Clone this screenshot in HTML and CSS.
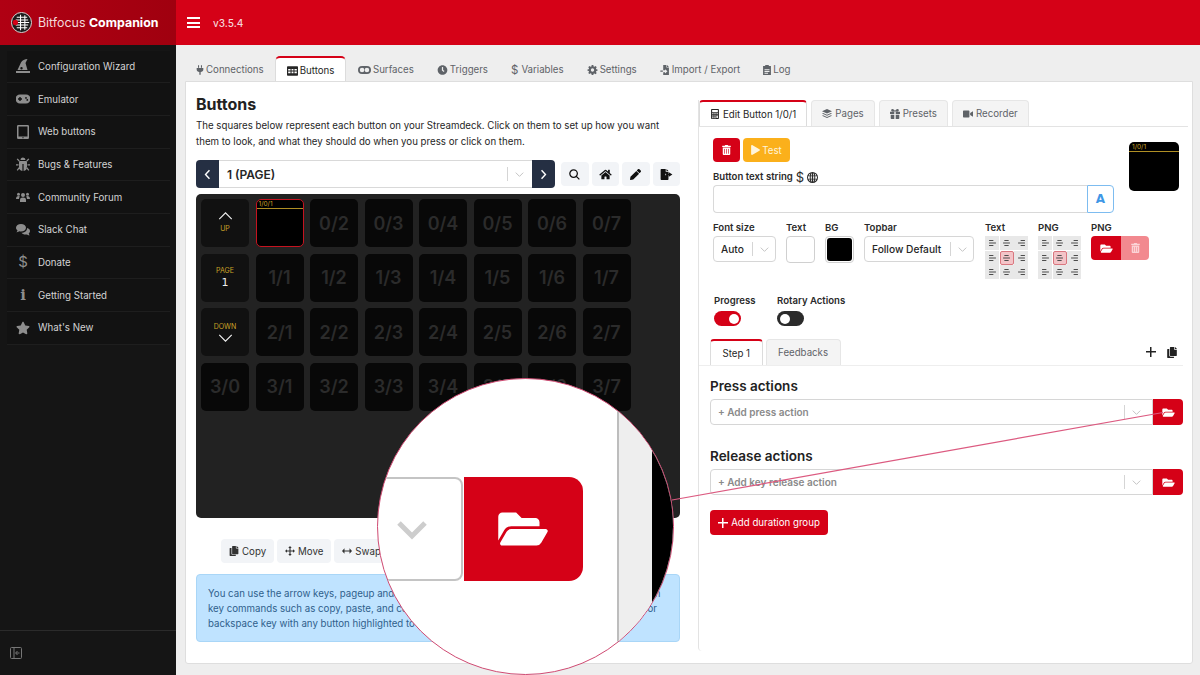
FILE: index.html
```html
<!DOCTYPE html>
<html lang="en">
<head>
    <meta charset="UTF-8">
    <meta name="viewport" content="width=device-width, initial-scale=1.0">
    <title>Bitfocus Companion</title>
    <link rel="stylesheet" href="styles.css">
</head>
<body>
    <!-- Icon sprite -->
    <svg class="sprite" xmlns="http://www.w3.org/2000/svg">
        <symbol id="i-folder" viewBox="0 0 576 512"><path d="M572.694 292.093L500.27 416.248A63.997 63.997 0 0 1 444.989 448H45.025c-18.523 0-30.064-20.093-20.731-36.093l72.424-124.155A64 64 0 0 1 152 256h399.964c18.523 0 30.064 20.093 20.73 36.093zM152 224h328v-48c0-26.51-21.49-48-48-48H272l-64-64H48C21.49 64 0 85.49 0 112v278.046l69.077-118.418C86.214 242.25 117.989 224 152 224z"/></symbol>
        <symbol id="i-trash" viewBox="0 0 448 512"><path d="M32 464a48 48 0 0 0 48 48h288a48 48 0 0 0 48-48V128H32zm272-256a16 16 0 0 1 32 0v224a16 16 0 0 1-32 0zm-96 0a16 16 0 0 1 32 0v224a16 16 0 0 1-32 0zm-96 0a16 16 0 0 1 32 0v224a16 16 0 0 1-32 0zM432 32H312l-9.4-18.7A24 24 0 0 0 281.1 0H166.8a23.72 23.72 0 0 0-21.4 13.3L136 32H16A16 16 0 0 0 0 48v32a16 16 0 0 0 16 16h416a16 16 0 0 0 16-16V48a16 16 0 0 0-16-16z"/></symbol>
        <symbol id="i-star" viewBox="0 0 576 512"><path d="M259.3 17.8L194 150.2 47.9 171.5c-26.2 3.8-36.7 36.1-17.7 54.6l105.7 103-25 145.5c-4.5 26.3 23.2 46 46.4 33.7L288 439.6l130.7 68.7c23.2 12.2 50.9-7.4 46.4-33.7l-25-145.5 105.7-103c19-18.5 8.5-50.8-17.7-54.6L382 150.2 316.7 17.8c-11.7-23.6-45.6-23.9-57.4 0z"/></symbol>
        <symbol id="i-home" viewBox="0 0 576 512"><path d="M280.37 148.26L96 300.11V464a16 16 0 0 0 16 16l112.06-.29a16 16 0 0 0 15.92-16V368a16 16 0 0 1 16-16h64a16 16 0 0 1 16 16v95.64a16 16 0 0 0 16 16.05L464 480a16 16 0 0 0 16-16V300L295.67 148.26a12.19 12.19 0 0 0-15.3 0zM571.6 251.47L488 182.56V44.05a12 12 0 0 0-12-12h-56a12 12 0 0 0-12 12v72.61L318.47 43a48 48 0 0 0-61 0L4.34 251.47a12 12 0 0 0-1.6 16.9l25.5 31A12 12 0 0 0 45.15 301l235.22-193.74a12.19 12.19 0 0 1 15.3 0L530.9 301a12 12 0 0 0 16.9-1.6l25.5-31a12 12 0 0 0-1.7-16.93z"/></symbol>
        <symbol id="i-search" viewBox="0 0 12 12"><path fill="none" stroke="currentColor" stroke-width="1.400" d="M5 .9a4.100 4.100 0 1 0 0 8.200 4.100 4.100 0 0 0 0-8.200zM8 8l3.300 3.300"/></symbol>
        <symbol id="i-pencil" viewBox="0 0 512 512"><path d="M497.9 142.1l-46.1 46.1c-4.7 4.7-12.3 4.7-17 0l-111-111c-4.7-4.7-4.7-12.3 0-17l46.1-46.1c18.7-18.7 49.1-18.7 67.9 0l60.1 60.1c18.8 18.7 18.8 49.1 0 67.9zM284.2 99.8L21.6 362.4.4 483.9c-2.9 16.4 11.4 30.6 27.8 27.8l121.5-21.3 262.6-262.6c4.7-4.7 4.7-12.3 0-17l-111-111c-4.8-4.7-12.4-4.7-17.1 0z"/></symbol>
        <symbol id="i-clock" viewBox="0 0 512 512"><path d="M256 8C119 8 8 119 8 256s111 248 248 248 248-111 248-248S393 8 256 8zm92.49 313l-20 25a16 16 0 0 1-22.49 2.5l-67-49.72a40 40 0 0 1-15-31.23V112a16 16 0 0 1 16-16h32a16 16 0 0 1 16 16v144l58 42.5a16 16 0 0 1 2.49 22.5z"/></symbol>
        <symbol id="i-play" viewBox="0 0 448 512"><path d="M424.4 214.7L72.4 6.6C43.8-10.3 0 6.1 0 47.9V464c0 37.5 40.7 60.1 72.4 41.3l352-208c31.4-18.5 31.5-64.1 0-82.6z"/></symbol>
        <symbol id="i-copy" viewBox="0 0 448 512"><path d="M320 448v40c0 13.255-10.745 24-24 24H24c-13.255 0-24-10.745-24-24V120c0-13.255 10.745-24 24-24h72v296c0 30.879 25.121 56 56 56h168zm0-344V0H152c-13.255 0-24 10.745-24 24v368c0 13.255 10.745 24 24 24h272c13.255 0 24-10.745 24-24V128H344c-13.2 0-24-10.8-24-24zm120.971-31.029L375.029 7.029A24 24 0 0 0 358.059 0H352v96h96v-6.059a24 24 0 0 0-7.029-16.97z"/></symbol>
        <symbol id="i-plug" viewBox="0 0 12 14"><path d="M3 0h1.600v3.500H3zM7.400 0H9v3.500H7.400zM1 4h10v2.200C11 8.500 9.300 9.800 7 10v4H5v-4C2.700 9.800 1 8.500 1 6.200z"/></symbol>
        <symbol id="i-table" viewBox="0 0 14 12"><path fill-rule="evenodd" d="M1 0h12a1 1 0 0 1 1 1v10a1 1 0 0 1-1 1H1a1 1 0 0 1-1-1V1a1 1 0 0 1 1-1zM1.500 3.500v2h3v-2zm4.300 0v2h2.400v-2zm3.700 0v2h3v-2zm-8 3.200v2.300h3V6.700zm4.300 0v2.300h2.400V6.700zm3.700 0v2.300h3V6.700z"/></symbol>
        <symbol id="i-toggle" viewBox="0 0 16 10"><path fill-rule="evenodd" d="M5 0h6a5 5 0 0 1 0 10H5A5 5 0 0 1 5 0zm6 2.200a2.800 2.800 0 1 0 0 5.600 2.800 2.800 0 0 0 0-5.600zm-6 0a2.800 2.800 0 1 0 0 5.600 2.800 2.800 0 0 0 0-5.600z"/></symbol>
        <symbol id="i-cog" viewBox="0 0 24 24"><path fill-rule="evenodd" d="M10 0h4l.6 3.300 2 .9L19.400 2.300l2.800 2.800-1.900 2.800.9 2L24 10.500v3.500l-2.800.6-.9 2 1.900 2.800-2.800 2.800-2.800-1.900-2 .9L14 24h-4l-.6-3.300-2-.9-2.800 1.900-2.800-2.800 1.900-2.800-.9-2L0 14v-3.500l2.800-.6.9-2-1.900-2.800 2.800-2.800 2.800 1.900 2-.9zM12 8a4 4 0 1 0 0 8 4 4 0 0 0 0-8z"/></symbol>
        <symbol id="i-import" viewBox="0 0 13 14"><path d="M4 0h4.500v3.500H12V14H4v-4h2.500v1.800L10 8.800 6.500 5.800V7.500H4zM9.300 0L12 2.700H9.300zM0 7.800h3.500v1.500H0z"/></symbol>
        <symbol id="i-file" viewBox="0 0 11 14"><path fill-rule="evenodd" d="M0 1.500h3V0h5v1.500h3V14H0zM2 6v1.200h7V6zm0 2.500v1.200h7V8.500zm0 2.500v1.200h5V11z"/></symbol>
        <symbol id="i-calc" viewBox="0 0 11 14"><path fill-rule="evenodd" d="M1 0h9a1 1 0 0 1 1 1v12a1 1 0 0 1-1 1H1a1 1 0 0 1-1-1V1a1 1 0 0 1 1-1zm.500 1.500v3h8v-3zm0 4.500v1.500h2V6zm3 0v1.500h2V6zm3 0v1.500h2V6zm-6 3v1.500h2V9zm3 0v1.500h2V9zm3 0v3.500h2V9zm-6 2.500V13h2v-1.500zm3 0V13h2v-1.500z"/></symbol>
        <symbol id="i-layers" viewBox="0 0 14 14"><path d="M7 0l7 3.200L7 6.400 0 3.200zM1.500 5.600L7 8.100l5.500-2.500L14 6.300 7 9.500 0 6.300zm0 3.200L7 11.300l5.500-2.500L14 9.500l-7 3.200-7-3.200z"/></symbol>
        <symbol id="i-gift" viewBox="0 0 14 14"><path d="M0 4h6v3H0zM8 4h6v3H8zM1 8h5v6H2a1 1 0 0 1-1-1zM8 8h5v5a1 1 0 0 1-1 1H8zM3.500 0C5 0 6.500 1.500 7 3 7.500 1.500 9 0 10.500 0 13 0 13 3.500 10.500 3.500h-7C1 3.500 1 0 3.500 0z"/></symbol>
        <symbol id="i-video" viewBox="0 0 14 10"><path d="M1 0h7a1 1 0 0 1 1 1v8a1 1 0 0 1-1 1H1a1 1 0 0 1-1-1V1a1 1 0 0 1 1-1zM10 3.500L14 1v8l-4-2.500z"/></symbol>
        <symbol id="i-wizard" viewBox="0 0 14 14"><path d="M1.500 11L5 3.500C6 1.200 9 0 11.500 0L9.500 4l2 7zM0 12h14v2H0zM5.500 8a1.200 1.200 0 1 0 0 2.400 1.200 1.200 0 0 0 0-2.400z"/></symbol>
        <symbol id="i-gamepad" viewBox="0 0 14 9"><path fill-rule="evenodd" d="M4 0h6a4.500 4.500 0 0 1 0 9H4A4.500 4.500 0 0 1 4 0zM3.300 2.500v1.300H2v1.400h1.300v1.300h1.400V5.200H6V3.800H4.700V2.500zm6.700 0a.9.900 0 1 0 0 1.800.9.900 0 0 0 0-1.800zm1.300 2a.9.900 0 1 0 0 1.800.9.900 0 0 0 0-1.800z"/></symbol>
        <symbol id="i-tablet" viewBox="0 0 12 14"><path fill-rule="evenodd" d="M1.200 0h9.600A1.200 1.200 0 0 1 12 1.200v11.600a1.200 1.200 0 0 1-1.200 1.200H1.200A1.200 1.200 0 0 1 0 12.800V1.200A1.200 1.200 0 0 1 1.200 0zm.300 1.500v10h9v-10zM6 12.100a.6.600 0 1 0 0 1.200.6.600 0 0 0 0-1.200z"/></symbol>
        <symbol id="i-bug" viewBox="0 0 14 14"><path d="M4.500 3a2.500 2.500 0 0 1 5 0zM3.500 4h7A2 2 0 0 1 11 5.300V10a4 4 0 0 1-3.400 3.900V7h-1.200v6.900A4 4 0 0 1 3 10V5.300A2 2 0 0 1 3.500 4zM0 7.300h2.500v1.300H0zM11.500 7.300H14v1.300h-2.500zM.700 2.300l.900-.9L3.700 3.500l-.9.9zM12.400 1.400l.9.9-2.100 2.100-.9-.9zM.700 13l2.100-2.800 1 .8-2.100 2.800zM13.300 13l-2.100-2.800-1 .8 2.100 2.800z"/></symbol>
        <symbol id="i-users" viewBox="0 0 14 10"><circle cx="2.500" cy="2.200" r="1.500"/><circle cx="11.500" cy="2.200" r="1.500"/><circle cx="7" cy="3" r="2"/><path d="M0 7c0-2 1-3 2.500-3 .6 0 1 .2 1.400.500C3.300 5.200 3 6 3 7zM14 7c0-2-1-3-2.500-3-.6 0-1 .2-1.400.500.6.7.900 1.500.900 2.500zM4 10V8c0-1.700 1-2.500 3-2.500s3 .8 3 2.500v2z"/></symbol>
        <symbol id="i-comments" viewBox="0 0 14 12"><path d="M5 0c2.800 0 5 1.600 5 3.800S7.800 7.500 5 7.500c-.6 0-1.200-.1-1.700-.2C2.500 8 1.400 8.300.3 8.300 1 7.700 1.400 7 1.500 6.400.6 5.700 0 4.800 0 3.800 0 1.600 2.200 0 5 0z"/><path d="M11 4c1.800.4 3 1.600 3 3 0 .9-.5 1.800-1.300 2.400.1.700.5 1.300 1.100 1.900-1 0-2-.3-2.800-.9-.5.1-1 .2-1.500.2-1.800 0-3.300-.7-4-1.800C8.500 8.700 11.300 6.800 11 4z"/></symbol>
        <symbol id="i-move" viewBox="0 0 14 14"><path d="M7 0l2.400 2.800H7.800v3.400h3.400V4.600L14 7l-2.800 2.400V7.800H7.800v3.400h1.600L7 14l-2.400-2.800h1.600V7.800H2.800v1.600L0 7l2.800-2.400v1.600h3.400V2.800H4.600z"/></symbol>
        <symbol id="i-swap" viewBox="0 0 14 8"><path d="M3.500 0v3.200h7V0L14 4l-3.500 4V4.800h-7V8L0 4z"/></symbol>
        <symbol id="i-export" viewBox="0 0 15 14"><path d="M0 1a1 1 0 0 1 1-1h5.500v3.500H10V6H6v2h4v5a1 1 0 0 1-1 1H1a1 1 0 0 1-1-1zM7.500 0L10 2.500H7.500zM10.500 4L15 7l-4.500 3V8H7V6h3.500z"/></symbol>
        <symbol id="i-globe" viewBox="0 0 14 14"><path fill-rule="evenodd" d="M7 0a7 7 0 1 1 0 14A7 7 0 0 1 7 0zM6.200 1.300C5.600 1.900 5.100 3 4.900 4.300h1.300zm1.600 0v3h1.300c-.2-1.300-.7-2.400-1.300-3zM3.600 4.300c.1-.9.400-1.700.7-2.300-1 .5-1.800 1.300-2.300 2.300zm6.800 0H12c-.5-1-1.300-1.800-2.300-2.300.3.600.6 1.400.7 2.300zM1.500 5.500c-.1.500-.2 1-.2 1.500s.1 1 .2 1.500h2V5.500zm3.300 0v3h1.400v-3zm3 0v3h1.400v-3zm2.700 0v3h2c.1-.5.2-1 .2-1.500s-.1-1-.2-1.500zM2 9.700c.5 1 1.300 1.800 2.300 2.300-.3-.6-.6-1.400-.7-2.300zm2.900 0c.2 1.300.7 2.400 1.300 3v-3zm2.900 0v3c.6-.6 1.100-1.700 1.300-3zm2.600 0c-.1.9-.4 1.700-.7 2.300 1-.5 1.800-1.300 2.300-2.300z"/></symbol>
        <symbol id="i-collapse" viewBox="0 0 12 12"><path fill="none" stroke="currentColor" d="M.5 1.500a1 1 0 0 1 1-1h9a1 1 0 0 1 1 1v9a1 1 0 0 1-1 1h-9a1 1 0 0 1-1-1zM4 .5v11M9.500 6H6M7.500 4L5.500 6l2 2"/></symbol>
        <symbol id="i-chev-down" viewBox="0 0 14 8"><path fill="none" stroke="currentColor" stroke-width="1.600" d="M1 1l6 6 6-6"/></symbol>
        <symbol id="i-align" viewBox="0 0 8 7"><path d="M0 0h5v1.300H0zM0 2.800h8v1.400H0zM0 5.700h5V7H0z"/></symbol>
        <symbol id="i-align-c" viewBox="0 0 8 7"><path d="M1.500 0h5v1.300h-5zM0 2.800h8v1.400H0zM1.500 5.700h5V7h-5z"/></symbol>
        <symbol id="i-align-r" viewBox="0 0 8 7"><path d="M3 0h5v1.300H3zM0 2.800h8v1.400H0zM3 5.700h5V7H3z"/></symbol>
    </svg>

    <div class="app">
        <!-- Sidebar -->
        <aside class="sidebar">
            <div class="brand">
                <svg class="brand-logo" viewBox="0 0 22 22">
                    <circle cx="11" cy="11" r="10.500" fill="#1b1b1b" stroke="#ddd" stroke-width="1"/>
                    <path d="M6 5.500h11M5 8.300h13M6 11h13M5 13.700h13M6 16.500h11M10 3v16M14.500 3.500v15" stroke="#fff" stroke-width="1.100" fill="none"/>
                    <circle cx="4.500" cy="11" r="2.800" fill="#d50117"/>
                </svg>
                <span>Bitfocus <b>Companion</b></span>
            </div>
            <nav class="nav">
                <a class="nav-item"><svg class="nav-icon"><use href="#i-wizard"/></svg>Configuration Wizard</a>
                <a class="nav-item"><svg class="nav-icon"><use href="#i-gamepad"/></svg>Emulator</a>
                <a class="nav-item"><svg class="nav-icon"><use href="#i-tablet"/></svg>Web buttons</a>
                <a class="nav-item"><svg class="nav-icon"><use href="#i-bug"/></svg>Bugs &amp; Features</a>
                <a class="nav-item"><svg class="nav-icon"><use href="#i-users"/></svg>Community Forum</a>
                <a class="nav-item"><svg class="nav-icon"><use href="#i-comments"/></svg>Slack Chat</a>
                <a class="nav-item"><span class="nav-icon nav-glyph">$</span>Donate</a>
                <a class="nav-item"><span class="nav-icon nav-glyph nav-info">i</span>Getting Started</a>
                <a class="nav-item"><svg class="nav-icon"><use href="#i-star"/></svg>What's New</a>
            </nav>
            <div class="sidebar-foot"><svg class="collapse-icon"><use href="#i-collapse"/></svg></div>
        </aside>

        <div class="main">
            <header class="topbar">
                <div class="burger"><i></i><i></i><i></i></div>
                <span class="version">v3.5.4</span>
            </header>

            <div class="content">
                <!-- Main tabs -->
                <div class="tabs main-tabs">
                    <a class="tab"><svg class="ico ico-n"><use href="#i-plug"/></svg>Connections</a>
                    <a class="tab active"><svg class="ico ico-t1"><use href="#i-table"/></svg>Buttons</a>
                    <a class="tab"><svg class="ico ico-l"><use href="#i-toggle"/></svg>Surfaces</a>
                    <a class="tab"><svg class="ico ico-t1"><use href="#i-clock"/></svg>Triggers</a>
                    <a class="tab"><span class="dollar">$</span>Variables</a>
                    <a class="tab"><svg class="ico ico-t1"><use href="#i-cog"/></svg>Settings</a>
                    <a class="tab"><svg class="ico"><use href="#i-import"/></svg>Import / Export</a>
                    <a class="tab"><svg class="ico ico-n"><use href="#i-file"/></svg>Log</a>
                </div>

                <div class="card">
                    <!-- Left column -->
                    <section class="col-left">
                        <h1 class="title">Buttons</h1>
                        <p class="intro">The squares below represent each button on your Streamdeck. Click on them to set up how you want them to look, and what they should do when you press or click on them.</p>

                        <div class="pager">
                            <div class="page-select">
                                <button class="nav-btn"><svg class="arrow" viewBox="0 0 8 14"><path d="M6.500 1.500L1.500 7l5 5.500"/></svg></button>
                                <div class="page-value">
                                    <span>1 (PAGE)</span>
                                    <i class="sep"></i>
                                    <svg class="chev"><use href="#i-chev-down"/></svg>
                                </div>
                                <button class="nav-btn"><svg class="arrow" viewBox="0 0 8 14"><path d="M1.500 1.500l5 5.500-5 5.500"/></svg></button>
                            </div>
                            <button class="tool"><svg class="ico-m"><use href="#i-search"/></svg></button>
                            <button class="tool"><svg class="ico-m ico-w"><use href="#i-home"/></svg></button>
                            <button class="tool"><svg class="ico-m"><use href="#i-pencil"/></svg></button>
                            <button class="tool"><svg class="ico-m ico-w"><use href="#i-export"/></svg></button>
                        </div>

                        <div class="deck">
                            <div class="key key-nav"><svg class="key-chev" viewBox="0 0 16 9"><path d="M1 8l7-7 7 7"/></svg><small>UP</small></div>
                            <div class="key key-selected"><span class="key-bar">1/0/1</span></div>
                            <div class="key">0/2</div><div class="key">0/3</div><div class="key">0/4</div><div class="key">0/5</div><div class="key">0/6</div><div class="key">0/7</div>
                            <div class="key key-nav"><small>PAGE</small><span class="key-num">1</span></div>
                            <div class="key">1/1</div><div class="key">1/2</div><div class="key">1/3</div><div class="key">1/4</div><div class="key">1/5</div><div class="key">1/6</div><div class="key">1/7</div>
                            <div class="key key-nav"><small>DOWN</small><svg class="key-chev" viewBox="0 0 16 9"><path d="M1 1l7 7 7-7"/></svg></div>
                            <div class="key">2/1</div><div class="key">2/2</div><div class="key">2/3</div><div class="key">2/4</div><div class="key">2/5</div><div class="key">2/6</div><div class="key">2/7</div>
                            <div class="key">3/0</div>
                            <div class="key">3/1</div><div class="key">3/2</div><div class="key">3/3</div><div class="key">3/4</div><div class="key">3/5</div><div class="key">3/6</div><div class="key">3/7</div>
                        </div>

                        <div class="deck-actions">
                            <button class="tool-text"><svg class="ico"><use href="#i-copy"/></svg>Copy</button>
                            <button class="tool-text"><svg class="ico"><use href="#i-move"/></svg>Move</button>
                            <button class="tool-text"><svg class="ico"><use href="#i-swap"/></svg>Swap</button>
                        </div>

                        <div class="callout">You can use the arrow keys, pageup and pagedown to navigate between buttons, and the common key commands such as copy, paste, and cut to move buttons too. You can also press the delete or backspace key with any button highlighted to delete it.</div>
                    </section>

                    <!-- Right column -->
                    <section class="col-right">
                        <div class="tabs edit-tabs">
                            <a class="tab boxed active"><svg class="ico"><use href="#i-calc"/></svg>Edit Button 1/0/1</a>
                            <a class="tab boxed"><svg class="ico"><use href="#i-layers"/></svg>Pages</a>
                            <a class="tab boxed"><svg class="ico"><use href="#i-gift"/></svg>Presets</a>
                            <a class="tab boxed"><svg class="ico"><use href="#i-video"/></svg>Recorder</a>
                        </div>

                        <div class="editor">
                            <div class="editor-top">
                                <div class="editor-fields">
                                    <div class="btn-row">
                                        <button class="btn btn-red btn-icon"><svg class="ico-t"><use href="#i-trash"/></svg></button>
                                        <button class="btn btn-amber"><svg class="ico-p"><use href="#i-play"/></svg>Test</button>
                                    </div>
                                    <div class="label label-string">Button text string <span class="label-dollar">$</span><svg class="ico-g"><use href="#i-globe"/></svg></div>
                                    <div class="text-input">
                                        <div class="text-field"></div>
                                        <div class="text-addon">A</div>
                                    </div>
                                </div>
                                <div class="preview"><span class="key-bar">1/0/1</span></div>
                            </div>

                            <div class="style-row">
                                <div class="field f-size">
                                    <div class="label">Font size</div>
                                    <div class="select small"><span>Auto</span><i class="sep"></i><svg class="chev"><use href="#i-chev-down"/></svg></div>
                                </div>
                                <div class="field f-text">
                                    <div class="label">Text</div>
                                    <div class="swatch"></div>
                                </div>
                                <div class="field f-bg">
                                    <div class="label">BG</div>
                                    <div class="swatch swatch-black"><i></i></div>
                                </div>
                                <div class="field f-top">
                                    <div class="label">Topbar</div>
                                    <div class="select small"><span>Follow Default</span><i class="sep"></i><svg class="chev"><use href="#i-chev-down"/></svg></div>
                                </div>
                                <div class="field f-grid">
                                    <div class="label">Text</div>
                                    <div class="align-grid">
                                        <i><svg><use href="#i-align"/></svg></i><i><svg><use href="#i-align-c"/></svg></i><i><svg><use href="#i-align-r"/></svg></i>
                                        <i><svg><use href="#i-align"/></svg></i><i class="on"><svg><use href="#i-align-c"/></svg></i><i><svg><use href="#i-align-r"/></svg></i>
                                        <i><svg><use href="#i-align"/></svg></i><i><svg><use href="#i-align-c"/></svg></i><i><svg><use href="#i-align-r"/></svg></i>
                                    </div>
                                </div>
                                <div class="field f-grid">
                                    <div class="label">PNG</div>
                                    <div class="align-grid">
                                        <i><svg><use href="#i-align"/></svg></i><i><svg><use href="#i-align-c"/></svg></i><i><svg><use href="#i-align-r"/></svg></i>
                                        <i><svg><use href="#i-align"/></svg></i><i class="on"><svg><use href="#i-align-c"/></svg></i><i><svg><use href="#i-align-r"/></svg></i>
                                        <i><svg><use href="#i-align"/></svg></i><i><svg><use href="#i-align-c"/></svg></i><i><svg><use href="#i-align-r"/></svg></i>
                                    </div>
                                </div>
                                <div class="field">
                                    <div class="label">PNG</div>
                                    <div class="png-btns">
                                        <button class="png-open"><svg class="ico-f"><use href="#i-folder"/></svg></button>
                                        <button class="png-del"><svg class="ico-t"><use href="#i-trash"/></svg></button>
                                    </div>
                                </div>
                            </div>

                            <div class="toggle-row">
                                <div class="toggle-field">
                                    <div class="label">Progress</div>
                                    <div class="switch on"></div>
                                </div>
                                <div class="toggle-field">
                                    <div class="label">Rotary Actions</div>
                                    <div class="switch"></div>
                                </div>
                            </div>
                        </div>

                        <div class="step-bar">
                            <a class="tab boxed active">Step 1</a>
                            <a class="tab boxed">Feedbacks</a>
                            <div class="step-tools">
                                <span class="plus"></span>
                                <svg class="ico-c"><use href="#i-copy"/></svg>
                            </div>
                        </div>

                        <h2 class="section-title">Press actions</h2>
                        <div class="action-row">
                            <div class="select wide"><span class="placeholder">+ Add press action</span><i class="sep"></i><svg class="chev"><use href="#i-chev-down"/></svg></div>
                            <button class="action-open"><svg class="ico-f"><use href="#i-folder"/></svg></button>
                        </div>

                        <h2 class="section-title release">Release actions</h2>
                        <div class="action-row">
                            <div class="select wide"><span class="placeholder">+ Add key release action</span><i class="sep"></i><svg class="chev"><use href="#i-chev-down"/></svg></div>
                            <button class="action-open"><svg class="ico-f"><use href="#i-folder"/></svg></button>
                        </div>

                        <button class="btn btn-red btn-duration"><span class="plus plus-white"></span>Add duration group</button>
                    </section>
                </div>
            </div>
        </div>
    </div>

    <!-- Callout: pointer line and magnifier -->
    <svg class="pointer" viewBox="0 0 1200 675"><path d="M672 500L1163 412.500"/></svg>
    <div class="lens">
        <div class="lens-select"><svg class="lens-chev" viewBox="0 0 32 20"><path d="M3 3l13 13L29 3"/></svg></div>
        <div class="lens-open"><svg class="lens-folder"><use href="#i-folder"/></svg></div>
        <div class="lens-rule"></div>
        <div class="lens-gray"></div>
        <div class="lens-black"></div>
    </div>
</body>
</html>
```

FILE: styles.css
```css
* {
    box-sizing: border-box;
}

body {
    margin: 0;
    width: 1200px;
    height: 675px;
    overflow: hidden;
    font-family: Inter, "Liberation Sans", sans-serif;
    font-size: 9.7px;
    color: #262626;
    background-color: #eeeeee;
}

button {
    font-family: inherit;
    border: none;
    padding: 0;
}

.sprite {
    display: none;
}

svg {
    fill: currentColor;
    display: block;
    flex: none;
}

.app {
    display: flex;
    height: 675px;
}

/* Sidebar */
.sidebar {
    width: 176px;
    flex: none;
    display: flex;
    flex-direction: column;
    background-color: #151515;
    color: #d4d4d4;
}

.brand {
    height: 45px;
    display: flex;
    align-items: center;
    gap: 6px;
    padding-left: 11px;
    font-size: 12.4px;
    color: #f3d9db;
    background: linear-gradient(to right, #b00013, #a0000f);
}

.brand b {
    color: #fff;
    font-weight: 700;
}

.brand-logo {
    width: 21px;
    height: 21px;
}

.nav {
    flex: 1;
    padding: 5.500px 6px 0 7px;
}

.nav-item {
    height: 32.7px;
    display: flex;
    align-items: center;
    font-size: 9.7px;
    background-color: #121212;
    border-bottom: 1px solid #1e1e1e;
}

.nav-icon {
    width: 14px;
    height: 14px;
    margin: 0 8px 0 9px;
    color: #8e8e8e;
}

.nav-glyph {
    display: block;
    text-align: center;
    line-height: 14px;
    font-size: 15px;
}

.nav-info {
    font-family: "DejaVu Serif", serif;
    font-weight: 700;
}

.sidebar-foot {
    height: 45px;
    border-top: 1px solid #2b2b2b;
    display: flex;
    align-items: center;
    padding-left: 10px;
}

.collapse-icon {
    width: 12px;
    height: 12px;
    color: #777;
}

/* Top bar */
.main {
    flex: 1;
    min-width: 0;
    display: flex;
    flex-direction: column;
}

.topbar {
    height: 45px;
    flex: none;
    display: flex;
    align-items: center;
    padding-left: 11px;
    background-color: #d50117;
    color: #f6d5d8;
}

.burger {
    width: 13px;
    margin-right: 13px;
    display: flex;
    flex-direction: column;
    gap: 2.500px;
}

.burger i {
    display: block;
    height: 2px;
    background-color: #fff;
}

.version {
    font-size: 10px;
    font-weight: 500;
}

/* Tabs */
.content {
    flex: 1;
    padding: 11px 7px 11px 9px;
    display: flex;
    flex-direction: column;
}

.tabs {
    display: flex;
}

.main-tabs {
    height: 25px;
    padding-left: 0;
}

.tab {
    display: flex;
    align-items: center;
    gap: 2px;
    height: 25px;
    padding: 2px 11.500px 0;
    color: #5f6368;
    font-size: 9.7px;
    white-space: nowrap;
}

.tab.active {
    color: #262626;
    background-color: #fff;
    border: 1px solid #dcdcdc;
    border-top: 2px solid #d50117;
    border-bottom: none;
    border-radius: 5px 5px 0 0;
    padding: 2px 11px 0;
}

.ico {
    width: 10px;
    height: 10px;
}

.ico-n {
    width: 8px;
}

.ico-t1 {
    width: 11px;
}

.ico-l {
    width: 13px;
}

.dollar {
    margin-right: 1px;
    font-size: 11.5px;
}

.main-tabs .tab:first-child {
    padding: 2px 11px 0;
}

/* Card */
.card {
    flex: 1;
    display: flex;
    min-height: 0;
    gap: 18px;
    background-color: #fff;
    border: 1px solid #dedede;
    border-radius: 0 0 3px 3px;
    padding: 11px 8px 0 10px;
}

.col-left {
    width: 484px;
    flex: none;
}

.title {
    margin: 0;
    font-size: 16px;
    font-weight: 700;
    line-height: 22px;
    color: #222;
}

.intro {
    margin: 3px 0 0;
    line-height: 15.500px;
    font-size: 9.7px;
}

.pager {
    display: flex;
    align-items: center;
    gap: 3px;
    margin-top: 11px;
}

.page-select {
    width: 359px;
    height: 28px;
    margin-right: 3px;
    display: flex;
}

.nav-btn {
    width: 23px;
    background-color: #252f43;
}

.nav-btn:first-child {
    border-radius: 4px 0 0 4px;
}

.nav-btn:last-child {
    border-radius: 0 4px 4px 0;
}

.arrow {
    width: 7px;
    height: 11px;
    margin: auto;
    fill: none;
    stroke: #fff;
    stroke-width: 1.800;
}

.page-value {
    flex: 1;
    display: flex;
    align-items: center;
    padding: 0 8px;
    border-top: 1px solid #d9d9d9;
    border-bottom: 1px solid #d9d9d9;
    font-size: 12px;
    font-weight: 600;
}

.page-value span {
    flex: 1;
}

.sep {
    display: block;
    width: 1px;
    height: 14px;
    background-color: #d5d5d5;
}

.chev {
    width: 9px;
    height: 5px;
    margin: 0 0 0 7px;
    color: #c4c4c4;
}

.tool {
    width: 27.500px;
    height: 24px;
    background-color: #f2f4f7;
    border-radius: 4px;
    color: #111;
}

.ico-m {
    width: 11px;
    height: 11px;
    margin: auto;
}

.ico-w {
    width: 13px;
}

/* Button grid */
.deck {
    height: 324px;
    margin-top: 6px;
    padding: 5px;
    display: grid;
    grid-template-columns: repeat(8, 48px);
    grid-auto-rows: 48px;
    gap: 6.500px;
    background-color: #222;
    border-radius: 5px;
}

.key {
    display: flex;
    flex-direction: column;
    align-items: center;
    justify-content: center;
    background-color: #080808;
    border-radius: 5px;
    font-size: 18px;
    font-weight: 600;
    color: #2b2b2b;
}

.key-nav {
    background-color: #111;
    color: #fff;
}

.key-nav small {
    color: #c9a227;
    font-size: 7px;
    font-weight: 400;
    line-height: 10px;
}

.key-chev {
    width: 15px;
    height: 8px;
    margin: 0 0 4px;
    fill: none;
    stroke: #f2f2f2;
    stroke-width: 1.300;
}

.key-nav small + .key-chev {
    margin: 2px 0 0;
}

.key-num {
    font-family: "DejaVu Sans", sans-serif;
    font-size: 11px;
    font-weight: 400;
    line-height: 14px;
    color: #eee;
}

.key-selected {
    justify-content: flex-start;
    align-items: stretch;
    background-color: #000;
    border: 1.500px solid #c5131f;
}

.key-bar {
    display: block;
    height: 9px;
    padding-left: 2px;
    font-size: 6.500px;
    line-height: 8px;
    font-weight: 400;
    color: #c9a227;
    border-bottom: 1px solid #b08f24;
}

.deck-actions {
    display: flex;
    gap: 3px;
    padding-left: 25px;
    margin-top: 21px;
}

.tool-text {
    display: flex;
    align-items: center;
    gap: 3px;
    height: 24px;
    padding: 0 8px;
    background-color: #f2f4f7;
    border-radius: 4px;
    font-size: 9.7px;
    color: #333;
}

.callout {
    margin-top: 11px;
    height: 68px;
    padding: 11px 11px 0;
    line-height: 15px;
    font-size: 9.7px;
    color: #2f5f8c;
    background-color: #bfe3ff;
    border: 1px solid #a9d6f7;
    border-radius: 4px;
}

/* Edit column */
.col-right {
    width: 485px;
    flex: none;
    height: 551px;
    margin-top: 7px;
    border-left: 1px solid #e3e3e3;
    border-bottom-left-radius: 4px;
}

.edit-tabs {
    gap: 4px;
    border-bottom: 1px solid #e3e3e3;
    width: 489px;
    height: 27px;
}

.tab.boxed {
    height: 26px;
    padding: 0 10px;
    gap: 3px;
    background-color: #f4f4f4;
    border: 1px solid #e6e6e6;
    border-bottom: none;
    border-radius: 4px 4px 0 0;
}

.tab.boxed.active {
    background-color: #fff;
    border: 1px solid #dcdcdc;
    border-top: 2px solid #d50117;
    border-bottom: none;
}

.editor {
    padding-left: 14px;
}

.editor-top {
    display: flex;
    padding-top: 11px;
}

.editor-fields {
    width: 401px;
}

.btn-row {
    display: flex;
    gap: 3px;
}

.btn {
    display: flex;
    align-items: center;
    justify-content: center;
    height: 24px;
    border-radius: 4px;
    color: #fff;
    font-size: 9.7px;
}

.btn-red {
    background-color: #d50117;
}

.btn-icon {
    width: 27px;
}

.btn-amber {
    width: 47px;
    gap: 2px;
    background-color: #fbb01b;
    color: #fff5dc;
}

.ico-t {
    width: 9px;
    height: 10px;
}

.ico-p {
    width: 9px;
    height: 10px;
}

.label {
    font-size: 9.6px;
    font-weight: 600;
    line-height: 12px;
    color: #2a2a2a;
    white-space: nowrap;
}

.label-string {
    display: flex;
    align-items: center;
    gap: 3px;
    margin-top: 9px;
}

.label-dollar {
    font-size: 13px;
    font-weight: 400;
}

.ico-g {
    width: 11px;
    height: 11px;
}

.text-input {
    display: flex;
    height: 28px;
    margin-top: 2px;
}

.text-field {
    flex: 1;
    border: 1px solid #d9d9d9;
    border-right: none;
    border-radius: 4px 0 0 4px;
}

.text-addon {
    width: 27px;
    display: flex;
    align-items: center;
    justify-content: center;
    border: 1px solid #7dbcf0;
    border-radius: 0 4px 4px 0;
    color: #3f97e6;
    font-family: "DejaVu Sans", sans-serif;
    font-size: 12px;
    font-weight: 700;
}

.preview {
    width: 50px;
    height: 49px;
    margin: 4px 0 0 15px;
    background-color: #000;
    border-radius: 5px;
    padding-top: 3px;
    overflow: hidden;
}

.preview .key-bar {
    height: 7px;
    padding-left: 3px;
    line-height: 5px;
}

.style-row {
    display: flex;
    margin-top: 9px;
}

.field {
    flex: none;
}

.field .label {
    margin-bottom: 2px;
}

.f-size {
    width: 73px;
}

.f-text {
    width: 39px;
}

.f-bg {
    width: 39px;
}

.f-top {
    width: 121px;
}

.f-grid {
    width: 53px;
}

.select {
    display: flex;
    align-items: center;
    border: 1px solid #d6d6d6;
    border-radius: 4px;
    background-color: #fff;
}

.select span {
    flex: 1;
}

.select.small {
    height: 26px;
    padding: 0 6px 0 7px;
    font-size: 10.2px;
    font-weight: 500;
}

.f-size .select {
    width: 63px;
}

.f-top .select {
    width: 110px;
}

.swatch {
    width: 29px;
    height: 27px;
    border: 1px solid #d0d0d0;
    border-radius: 4px;
    background-color: #fff;
}

.swatch-black {
    padding: 1px;
}

.swatch-black i {
    display: block;
    height: 100%;
    background-color: #000;
    border-radius: 3px;
}

.align-grid {
    width: 43px;
    display: grid;
    grid-template-columns: repeat(3, 14px);
    grid-auto-rows: 14px;
    gap: 0.500px;
}

.align-grid i {
    display: flex;
    align-items: center;
    justify-content: center;
    background-color: #e8e8e8;
    color: #4d4d4d;
}

.align-grid i svg {
    width: 7px;
    height: 6px;
}

.align-grid i.on {
    background-color: #f3c4c8;
    border: 1px solid #d9777f;
    border-radius: 2px;
}

.png-btns {
    display: flex;
    width: 58px;
    height: 24px;
}

.png-open {
    width: 30px;
    background-color: #d50117;
    border-radius: 4px 0 0 4px;
    color: #fff;
}

.png-del {
    width: 28px;
    background-color: #f2898f;
    border-radius: 0 4px 4px 0;
    color: #fbd3d6;
}

.ico-f {
    width: 13px;
    height: 11px;
    margin: auto;
}

.png-del .ico-t {
    margin: auto;
}

.btn-icon .ico-t {
    margin: auto;
}

.toggle-row {
    display: flex;
    margin-top: 16px;
    padding-left: 1px;
    padding-bottom: 13px;
}

.toggle-field {
    width: 63px;
}

.switch {
    width: 27px;
    height: 15px;
    margin-top: 4px;
    border-radius: 8px;
    background-color: #2b2b2b;
    position: relative;
}

/* the knob sits on top of the track */
.switch::after {
    content: "";
    position: absolute;
    top: 2.500px;
    left: 2.500px;
    width: 10px;
    height: 10px;
    border-radius: 50%;
    background-color: #fff;
}

.switch.on {
    background-color: #d50117;
}

.switch.on::after {
    left: 14.500px;
}

/* Steps */
.step-bar {
    display: flex;
    gap: 3px;
    align-items: flex-end;
    height: 27px;
    padding-left: 11px;
    border-bottom: 1px solid #eee;
}

.step-bar .tab.boxed {
    padding: 0 11.500px;
}

.step-tools {
    margin-left: auto;
    align-self: center;
    display: flex;
    align-items: center;
    gap: 11px;
    padding-right: 6px;
}

.plus {
    display: block;
    width: 10px;
    height: 10px;
    background:
        linear-gradient(#222, #222) center / 100% 1.500px no-repeat,
        linear-gradient(#222, #222) center / 1.500px 100% no-repeat;
}

.plus-white {
    background:
        linear-gradient(#fff, #fff) center / 100% 1.500px no-repeat,
        linear-gradient(#fff, #fff) center / 1.500px 100% no-repeat;
}

.ico-c {
    width: 10px;
    height: 11px;
    color: #222;
}

.section-title {
    margin: 11px 0 4px 11px;
    font-size: 13.500px;
    font-weight: 600;
    line-height: 18px;
    color: #222;
}

.section-title.release {
    margin-top: 22px;
}

.action-row {
    display: flex;
    height: 26px;
    margin-left: 11px;
}

.select.wide {
    flex: 1;
    padding: 0 11px 0 7px;
    border-radius: 4px 0 0 4px;
}

.placeholder {
    font-size: 10px;
    font-weight: 600;
    color: #8a8a8a;
}

.action-open {
    width: 30px;
    background-color: #d50117;
    border-radius: 0 4px 4px 0;
    color: #fff;
}

.btn-duration {
    width: 118px;
    height: 25px;
    gap: 3px;
    margin: 15px 0 0 11px;
}

/* Pointer and magnifier */
.pointer {
    position: absolute;
    top: 0;
    left: 0;
    width: 1200px;
    height: 675px;
    fill: none;
    stroke: #dc5a80;
    stroke-width: 1.200;
    pointer-events: none;
}

.lens {
    position: absolute;
    left: 377px;
    top: 378px;
    width: 297px;
    height: 297px;
    border-radius: 50%;
    border: 1.500px solid #cf4a72;
    background-color: #fff;
    overflow: hidden;
}

.lens-select {
    position: absolute;
    left: -20px;
    top: 98px;
    width: 105px;
    height: 104px;
    border: 2px solid #c4c4c4;
    border-radius: 0 8px 8px 0;
}

.lens-chev {
    position: absolute;
    left: 36px;
    top: 41px;
    width: 32px;
    height: 20px;
    fill: none;
    stroke: #cdcdcd;
    stroke-width: 5;
}

.lens-open {
    position: absolute;
    left: 85.500px;
    top: 97.500px;
    width: 119px;
    height: 104px;
    display: flex;
    background-color: #d50117;
    border-radius: 0 14px 14px 0;
    color: #fff;
}

.lens-folder {
    width: 50px;
    height: 44px;
    margin: auto;
}

.lens-rule {
    position: absolute;
    left: 239px;
    top: 0;
    width: 2px;
    height: 100%;
    background-color: #bdbdbd;
}

.lens-gray {
    position: absolute;
    left: 241px;
    top: 0;
    width: 33px;
    height: 100%;
    background-color: #eeeeee;
}

.lens-black {
    position: absolute;
    left: 274px;
    top: 0;
    width: 30px;
    height: 100%;
    background-color: #000;
}
```
